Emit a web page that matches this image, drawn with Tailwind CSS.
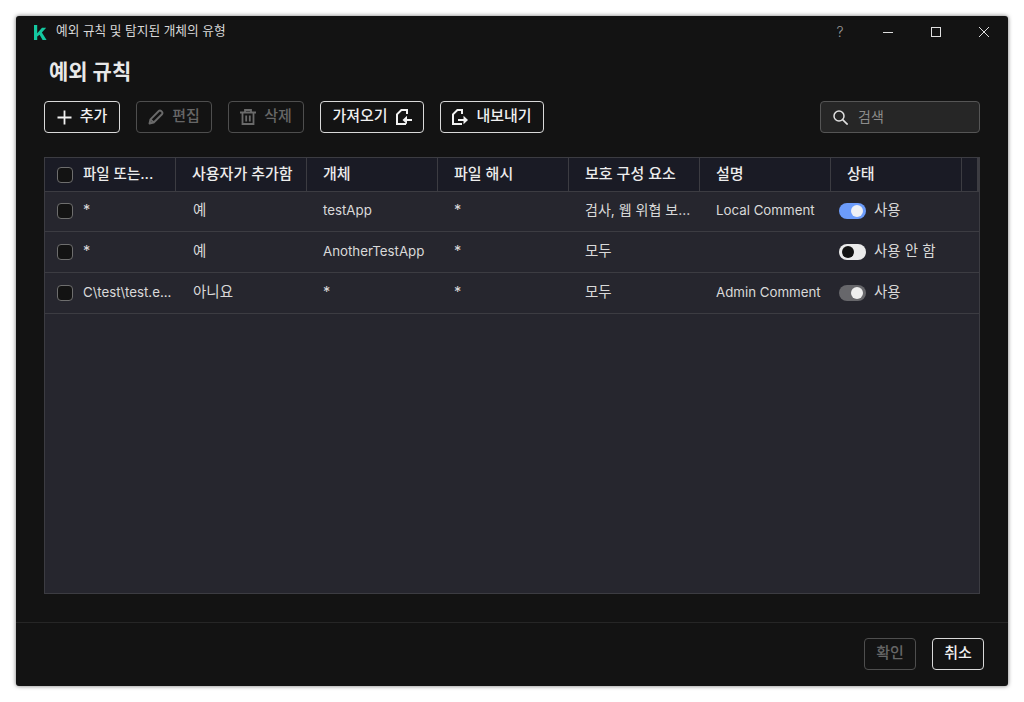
<!doctype html>
<html lang="ko"><head><meta charset="utf-8"><script src="https://cdn.jsdelivr.net/npm/@tailwindcss/browser@4"></script></head>
<body class="bg-white">
<div class="p-4 w-[1024px] h-[702px] font-['Inter','Noto_Sans_CJK_KR',sans-serif] text-[14.5px] leading-5 text-[#e6e6e6]">
<div class="w-[992px] h-[670px] bg-[#131313] rounded-[3px] shadow-[0_0_4px_rgba(0,0,0,0.55)] flex flex-col">
  <!-- title bar -->
  <div class="h-[32px] flex items-center pl-[17px] shrink-0">
    <svg class="w-[14px] h-[15px]" viewBox="0 0 14 15"><path fill="#14c8a0" d="M1 0h3.2v15H1zM4.2 8.2 9 2.8h4.2L8.9 7.6 13.6 15H9.6L6.6 9.8 4.2 11.6z"/></svg>
    <span class="ml-[9px] -mt-[2px] text-[12.7px] text-[#d8d8d8]">예외 규칙 및 탐지된 개체의 유형</span>
    <span class="ml-auto text-[14px] font-light text-[#9a9a9a] w-[48px] text-center">?</span>
    <div class="w-[48px] flex justify-center"><div class="w-[10px] h-px bg-[#dddddd]"></div></div>
    <div class="w-[48px] flex justify-center"><div class="w-[10px] h-[10px] border border-[#e0e0e0]"></div></div>
    <div class="w-[48px] flex justify-center"><svg class="w-[10px] h-[10px]" viewBox="0 0 10 10"><path stroke="#dddddd" fill="none" d="M0 0l10 10M10 0L0 10"/></svg></div>
  </div>
  <!-- heading -->
  <div class="pl-[33px] pt-[10px] h-[53px] shrink-0 text-[21px] leading-[28px] font-bold text-[#e8e8e8]">예외 규칙</div>
  <!-- toolbar -->
  <div class="ml-[28px] mr-[28px] h-[32px] flex items-center shrink-0 text-[15px]">
    <button class="w-[76px] h-[32px] border border-[#d9d9d9] rounded-[4px] flex items-center justify-center gap-[8px] font-medium text-[#f0f0f0]">
      <svg class="w-[15px] h-[15px]" viewBox="0 0 15 15"><path stroke="#f2f2f2" stroke-width="1.8" fill="none" d="M7.5 0.5v14M0.5 7.5h14"/></svg><span class="-mt-[3px]">추가</span>
    </button>
    <button class="ml-[16px] w-[76px] h-[32px] border border-[#4e4e4e] rounded-[4px] flex items-center justify-center gap-[8px] font-medium text-[#666666]">
      <svg class="w-[16px] h-[16px]" viewBox="0 0 16 16"><path stroke="#6a6a6a" stroke-width="1.9" fill="none" stroke-linejoin="round" d="M1.5 14.5l1-4.2L10.8 2a1.6 1.6 0 0 1 2.3 0l.9.9a1.6 1.6 0 0 1 0 2.3L5.7 13.5zM2.5 10.3l3.2 3.2"/></svg><span class="-mt-[3px]">편집</span>
    </button>
    <button class="ml-[16px] w-[76px] h-[32px] border border-[#4e4e4e] rounded-[4px] flex items-center justify-center gap-[8px] font-medium text-[#666666]">
      <svg class="w-[16px] h-[16px]" viewBox="0 0 16 16"><path stroke="#6a6a6a" stroke-width="1.8" fill="none" d="M0 3.5h16M5 3.500V1h6v2.500M2.500 3.500V15h11V3.500M6.200 6.500v6M9.800 6.500v6"/></svg><span class="-mt-[3px]">삭제</span>
    </button>
    <button class="ml-[16px] w-[104px] h-[32px] border border-[#d9d9d9] rounded-[4px] flex items-center justify-center gap-[8px] font-medium text-[#f0f0f0]">
      <span class="-mt-[3px]">가져오기</span>
      <svg class="w-[16px] h-[16px]" viewBox="0 0 16 16"><path stroke="#f2f2f2" stroke-width="2" fill="none" d="M11 5V1H5.400L1 5.400V15h9"/><path stroke="#f2f2f2" stroke-width="2" fill="none" d="M16 11H9"/><path fill="#f2f2f2" d="M6.500 11 11 6.800v8.400z"/></svg>
    </button>
    <button class="ml-[16px] w-[104px] h-[32px] border border-[#d9d9d9] rounded-[4px] flex items-center justify-center gap-[8px] font-medium text-[#f0f0f0]">
      <svg class="w-[16px] h-[16px]" viewBox="0 0 16 16"><path stroke="#f2f2f2" stroke-width="2" fill="none" d="M10 5V1H5.400L1 5.400V15h9"/><path stroke="#f2f2f2" stroke-width="2" fill="none" d="M6 11h7"/><path fill="#f2f2f2" d="M16 11 11.500 6.800v8.400z"/></svg>
      <span class="-mt-[3px]">내보내기</span>
    </button>
    <div class="ml-auto w-[160px] h-[32px] border border-[#555555] bg-[#262626] rounded-[4px] flex items-center pl-[12px] gap-[10px] text-[14px] text-[#8c8c8c]">
      <svg class="w-[15px] h-[15px]" viewBox="0 0 15 15"><circle cx="6" cy="6" r="5" stroke="#e0e0e0" stroke-width="1.5" fill="none"/><path stroke="#e0e0e0" stroke-width="1.6" d="M9.600 9.600l5 5"/></svg><span class="-mt-px">검색</span>
    </div>
  </div>
  <!-- table -->
  <div class="mt-[24px] mx-[28px] h-[437px] border border-[#3c3c42] bg-[#26262e] shrink-0">
    <div class="grid grid-cols-[131px_131px_131px_131px_131px_131px_131px_1fr] h-[34px] bg-[#1a1b25] border-b border-[#3c3c42] border-r-[2px] border-r-[#3c3c42] font-medium text-[15px] text-[#ececec]">
      <div class="flex items-center pl-[12px] gap-[10px] border-r border-[#3c3c42]"><span class="w-[16px] h-[16px] rounded-[4px] border border-[#6e6e6e] bg-[#131313] shrink-0"></span><span class="-mt-[2px] text-[14.5px]">파일 또는...</span></div>
      <div class="flex items-center pl-[16px] border-r border-[#3c3c42]"><span class="-mt-[2px]">사용자가 추가함</span></div>
      <div class="flex items-center pl-[16px] border-r border-[#3c3c42]"><span class="-mt-[2px]">개체</span></div>
      <div class="flex items-center pl-[16px] border-r border-[#3c3c42]"><span class="-mt-[2px]">파일 해시</span></div>
      <div class="flex items-center pl-[16px] border-r border-[#3c3c42]"><span class="-mt-[2px]">보호 구성 요소</span></div>
      <div class="flex items-center pl-[16px] border-r border-[#3c3c42]"><span class="-mt-[2px]">설명</span></div>
      <div class="flex items-center pl-[16px] border-r border-[#3c3c42]"><span class="-mt-[2px]">상태</span></div>
      <div></div>
    </div>
    <!-- row 1 -->
    <div class="grid grid-cols-[131px_131px_131px_131px_131px_130px_1fr] h-[40px] pb-[2px] border-b border-[#3c3c42] items-center text-[#d9d9d9]">
      <div class="flex items-center pl-[12px] gap-[10px]"><span class="w-[16px] h-[16px] rounded-[4px] border border-[#6e6e6e] bg-[#131313] shrink-0"></span><span class="-mt-[2px]">*</span></div>
      <div class="pl-[17px] -mt-[1px]">예</div>
      <div class="pl-[16px] -mt-[2px] text-[13.3px]">testApp</div>
      <div class="pl-[16px] -mt-[2px]">*</div>
      <div class="pl-[16px] -mt-[1px] text-[14px]">검사, 웹 위협 보...</div>
      <div class="pl-[16px] -mt-[2px] text-[13.3px]">Local Comment</div>
      <div class="flex items-center pl-[9px] gap-[8px]"><span class="w-[27px] h-[16px] rounded-full bg-[#6c9cfb] flex items-center justify-end pr-[3px]"><span class="w-[12px] h-[12px] rounded-full bg-[#eef0f5]"></span></span><span class="-mt-[1px]">사용</span></div>
    </div>
    <!-- row 2 -->
    <div class="grid grid-cols-[131px_131px_131px_131px_131px_130px_1fr] h-[41px] border-b border-[#3c3c42] items-center text-[#d9d9d9]">
      <div class="flex items-center pl-[12px] gap-[10px]"><span class="w-[16px] h-[16px] rounded-[4px] border border-[#6e6e6e] bg-[#131313] shrink-0"></span><span class="-mt-[2px]">*</span></div>
      <div class="pl-[17px] -mt-[3px]">예</div>
      <div class="pl-[16px] -mt-[2px] text-[13.3px]">AnotherTestApp</div>
      <div class="pl-[16px] -mt-[2px]">*</div>
      <div class="pl-[16px] -mt-[3px]">모두</div>
      <div></div>
      <div class="flex items-center pl-[9px] gap-[8px]"><span class="w-[27px] h-[16px] rounded-full bg-[#ebebeb] flex items-center pl-[3px]"><span class="w-[12px] h-[12px] rounded-full bg-[#131313]"></span></span><span class="-mt-[3px]">사용 안 함</span></div>
    </div>
    <!-- row 3 -->
    <div class="grid grid-cols-[131px_131px_131px_131px_131px_130px_1fr] h-[41px] border-b border-[#3c3c42] items-center text-[#d9d9d9]">
      <div class="flex items-center pl-[12px] gap-[10px]"><span class="w-[16px] h-[16px] rounded-[4px] border border-[#6e6e6e] bg-[#131313] shrink-0"></span><span class="text-[13.3px] -mt-[2px]">C\test\test.e...</span></div>
      <div class="pl-[17px] -mt-[3px]">아니요</div>
      <div class="pl-[16px] -mt-[2px]">*</div>
      <div class="pl-[16px] -mt-[2px]">*</div>
      <div class="pl-[16px] -mt-[3px]">모두</div>
      <div class="pl-[16px] -mt-[2px] text-[13.3px]">Admin Comment</div>
      <div class="flex items-center pl-[9px] gap-[8px]"><span class="w-[27px] h-[16px] rounded-full bg-[#67676b] flex items-center justify-end pr-[3px]"><span class="w-[12px] h-[12px] rounded-full bg-[#eeeeee]"></span></span><span class="-mt-[3px]">사용</span></div>
    </div>
  </div>
  <!-- footer -->
  <div class="mt-[28px] border-t border-[#262626] flex-1 flex items-start justify-end pt-[15px] pr-[24px] gap-[16px] text-[15px]">
    <button class="w-[52px] h-[32px] border border-[#4e4e4e] rounded-[4px] font-medium text-[#666666]"><span class="block -mt-[3px]">확인</span></button>
    <button class="w-[52px] h-[32px] border border-[#d9d9d9] rounded-[4px] font-medium text-[#f0f0f0]"><span class="block -mt-[3px]">취소</span></button>
  </div>
</div>
</div>
</body></html>
